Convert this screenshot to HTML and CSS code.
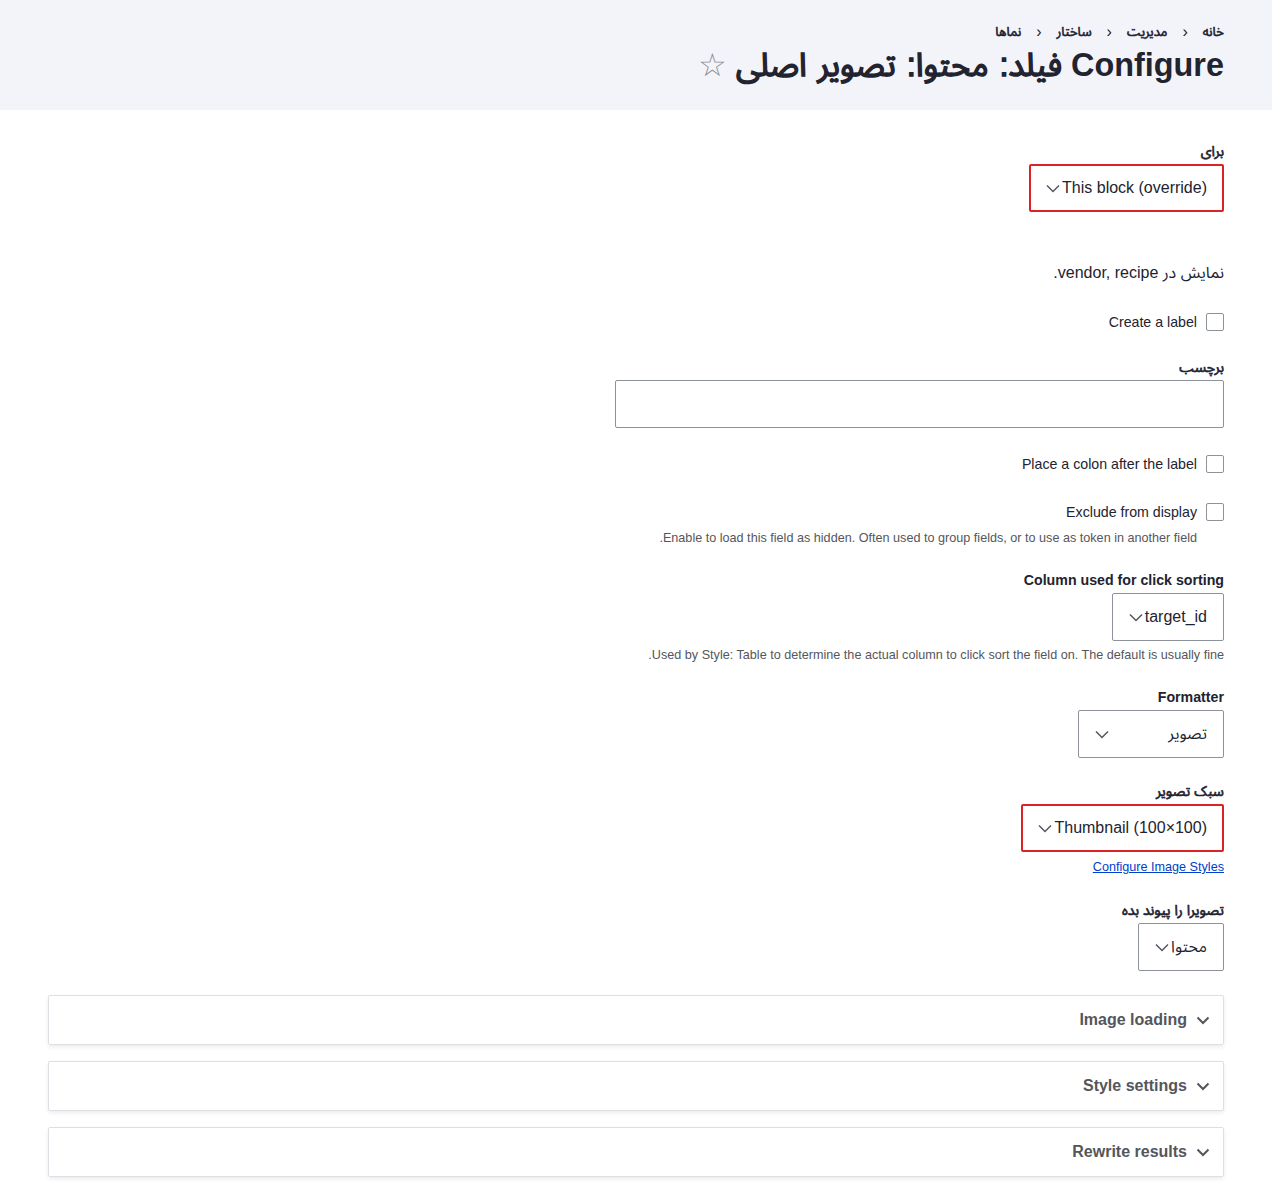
FILE: index.html
```html
<!DOCTYPE html>
<html lang="fa" dir="rtl">
<head>
<meta charset="utf-8">
<title>Configure</title>
<link rel="stylesheet" href="styles.css">
</head>
<body>
<header class="page-header">
  <nav class="breadcrumb">
    <a href="#" class="fb">خانه</a><span class="sep">‹</span>
    <a href="#" class="fb">مدیریت</a><span class="sep">‹</span>
    <a href="#" class="fb">ساختار</a><span class="sep">‹</span>
    <a href="#" class="fb">نماها</a>
  </nav>
  <h1 class="title">Configure <span class="fb title-fa">فیلد: محتوا: تصویر اصلی</span> <span class="star">☆</span></h1>
</header>
<main class="content">
  <div class="item item-for">
    <label class="label"><span class="fb">برای</span></label>
    <div class="select error"><span>This block (override)</span><svg class="chev" width="14" height="9" viewBox="0 0 14 9"><path d="M1 1.5l6 6 6-6" fill="none" stroke="#545560" stroke-width="1.5"/></svg></div>
  </div>

  <p class="item item-text">نمایش در vendor, recipe.</p>

  <div class="item item-check1">
    <div class="check"><span class="box"></span><span>Create a label</span></div>
  </div>

  <div class="item item-std">
    <label class="label"><span class="fb">برچسب</span></label>
    <div class="textinput"></div>
  </div>

  <div class="item item-std">
    <div class="check"><span class="box"></span><span>Place a colon after the label</span></div>
  </div>

  <div class="item item-std">
    <div class="check"><span class="box"></span><span>Exclude from display</span></div>
    <div class="desc indent">Enable to load this field as hidden. Often used to group fields, or to use as token in another field.</div>
  </div>

  <div class="item item-25">
    <label class="label">Column used for click sorting</label>
    <div class="select"><span>target_id</span><svg class="chev" width="14" height="9" viewBox="0 0 14 9"><path d="M1 1.5l6 6 6-6" fill="none" stroke="#545560" stroke-width="1.5"/></svg></div>
    <div class="desc">Used by Style: Table to determine the actual column to click sort the field on. The default is usually fine.</div>
  </div>

  <div class="item item-25">
    <label class="label">Formatter</label>
    <div class="select wide"><span>تصویر</span><svg class="chev" width="14" height="9" viewBox="0 0 14 9"><path d="M1 1.5l6 6 6-6" fill="none" stroke="#545560" stroke-width="1.5"/></svg></div>
  </div>

  <div class="item item-std">
    <label class="label"><span class="fb">سبک تصویر</span></label>
    <div class="select error"><span>Thumbnail (100×100)</span><svg class="chev" width="14" height="9" viewBox="0 0 14 9"><path d="M1 1.5l6 6 6-6" fill="none" stroke="#545560" stroke-width="1.5"/></svg></div>
    <a class="link" href="#">Configure Image Styles</a>
  </div>

  <div class="item item-26">
    <label class="label"><span class="fb">تصویرا را پیوند بده</span></label>
    <div class="select"><span>محتوا</span><svg class="chev" width="14" height="9" viewBox="0 0 14 9"><path d="M1 1.5l6 6 6-6" fill="none" stroke="#545560" stroke-width="1.5"/></svg></div>
  </div>

  <div class="panels">
    <div class="panel"><svg class="pchev" width="14" height="9" viewBox="0 0 14 9"><path d="M1.5 1.5l5.5 5.5 5.5-5.5" fill="none" stroke="#55565b" stroke-width="2"/></svg><span>Image loading</span></div>
    <div class="panel"><svg class="pchev" width="14" height="9" viewBox="0 0 14 9"><path d="M1.5 1.5l5.5 5.5 5.5-5.5" fill="none" stroke="#55565b" stroke-width="2"/></svg><span>Style settings</span></div>
    <div class="panel"><svg class="pchev" width="14" height="9" viewBox="0 0 14 9"><path d="M1.5 1.5l5.5 5.5 5.5-5.5" fill="none" stroke="#55565b" stroke-width="2"/></svg><span>Rewrite results</span></div>
  </div>
</main>
</body>
</html>
```

FILE: styles.css
```css
* { box-sizing: border-box; }
html, body { margin: 0; padding: 0; }
body {
  font-family: "Liberation Sans", "Noto Sans Arabic", sans-serif;
  color: #222330;
  background: #fff;
  font-size: 16px;
}
.fb {
  font-weight: 400;
  -webkit-text-stroke: 0.045em currentColor;
}
.page-header {
  background: #f3f4f9;
  height: 110px;
  padding: 24px 48px 0 48px;
}
.breadcrumb {
  display: flex;
  align-items: center;
  height: 16px;
  font-size: 13px;
  font-weight: bold;
  line-height: 16px;
}
.breadcrumb a { color: #222330; text-decoration: none; }
.breadcrumb .sep {
  margin: 0 15px;
  font-weight: normal;
  color: #222330;
  font-size: 16px;
}
.title {
  margin: 5px 0 0 0;
  font-size: 32.4px;
  line-height: 40px;
  font-weight: bold;
  color: #222330;
}
.title-fa { word-spacing: 2px; }
.star {
  font-weight: normal;
  color: #8e929c;
  font-size: 32px;
}
.content { padding: 0 48px 40px 48px; }
.item { display: flex; flex-direction: column; align-items: flex-start; margin: 0; }
.item-for { margin-top: 32px; }
.item-text { margin-top: 49px; margin-bottom: 0; font-size: 16px; line-height: 24px; display: block; }
.item-check1 { margin-top: 25px; }
.item-std { margin-top: 24px; }
.item-25 { margin-top: 25px; }
.item-26 { margin-top: 26px; }
.label {
  font-size: 14.2px;
  font-weight: bold;
  line-height: 18px;
  margin-bottom: 4px;
}
.select {
  display: flex;
  align-items: center;
  height: 48px;
  padding: 0 16px;
  border: 1px solid #8e929c;
  border-radius: 2px;
  font-size: 16px;
  gap: 2px;
  color: #222330;
}
.select.error { border: 2px solid #dc2323; padding: 0 15px; }
.select.wide { width: 146px; justify-content: space-between; }
.chev { display: block; margin-top: 1px; }
.textinput {
  width: 609px;
  height: 48px;
  border: 1px solid #8e929c;
  border-radius: 2px;
}
.check {
  display: flex;
  align-items: center;
  height: 24px;
  font-size: 14.2px;
  gap: 9px;
}
.box {
  width: 18px;
  height: 18px;
  border: 1px solid #8e929c;
  border-radius: 2px;
  background: #fff;
}
.desc {
  font-size: 12.64px;
  line-height: 16px;
  color: #55565b;
  margin-top: 6px;
}
.desc.indent { margin-right: 27px; }
.link {
  font-size: 12.64px;
  line-height: 16px;
  color: #003ecc;
  margin-top: 7px;
}
.panels {
  margin-top: 24px;
  display: flex;
  flex-direction: column;
  gap: 16px;
}
.panel {
  height: 50px;
  border: 1px solid #dedfe4;
  border-radius: 2px;
  box-shadow: 0 2px 4px rgba(0, 0, 0, 0.08);
  display: flex;
  align-items: center;
  padding: 0 13px;
  gap: 9px;
  font-size: 16px;
  font-weight: bold;
  color: #55565b;
}
.pchev { display: block; }
```
